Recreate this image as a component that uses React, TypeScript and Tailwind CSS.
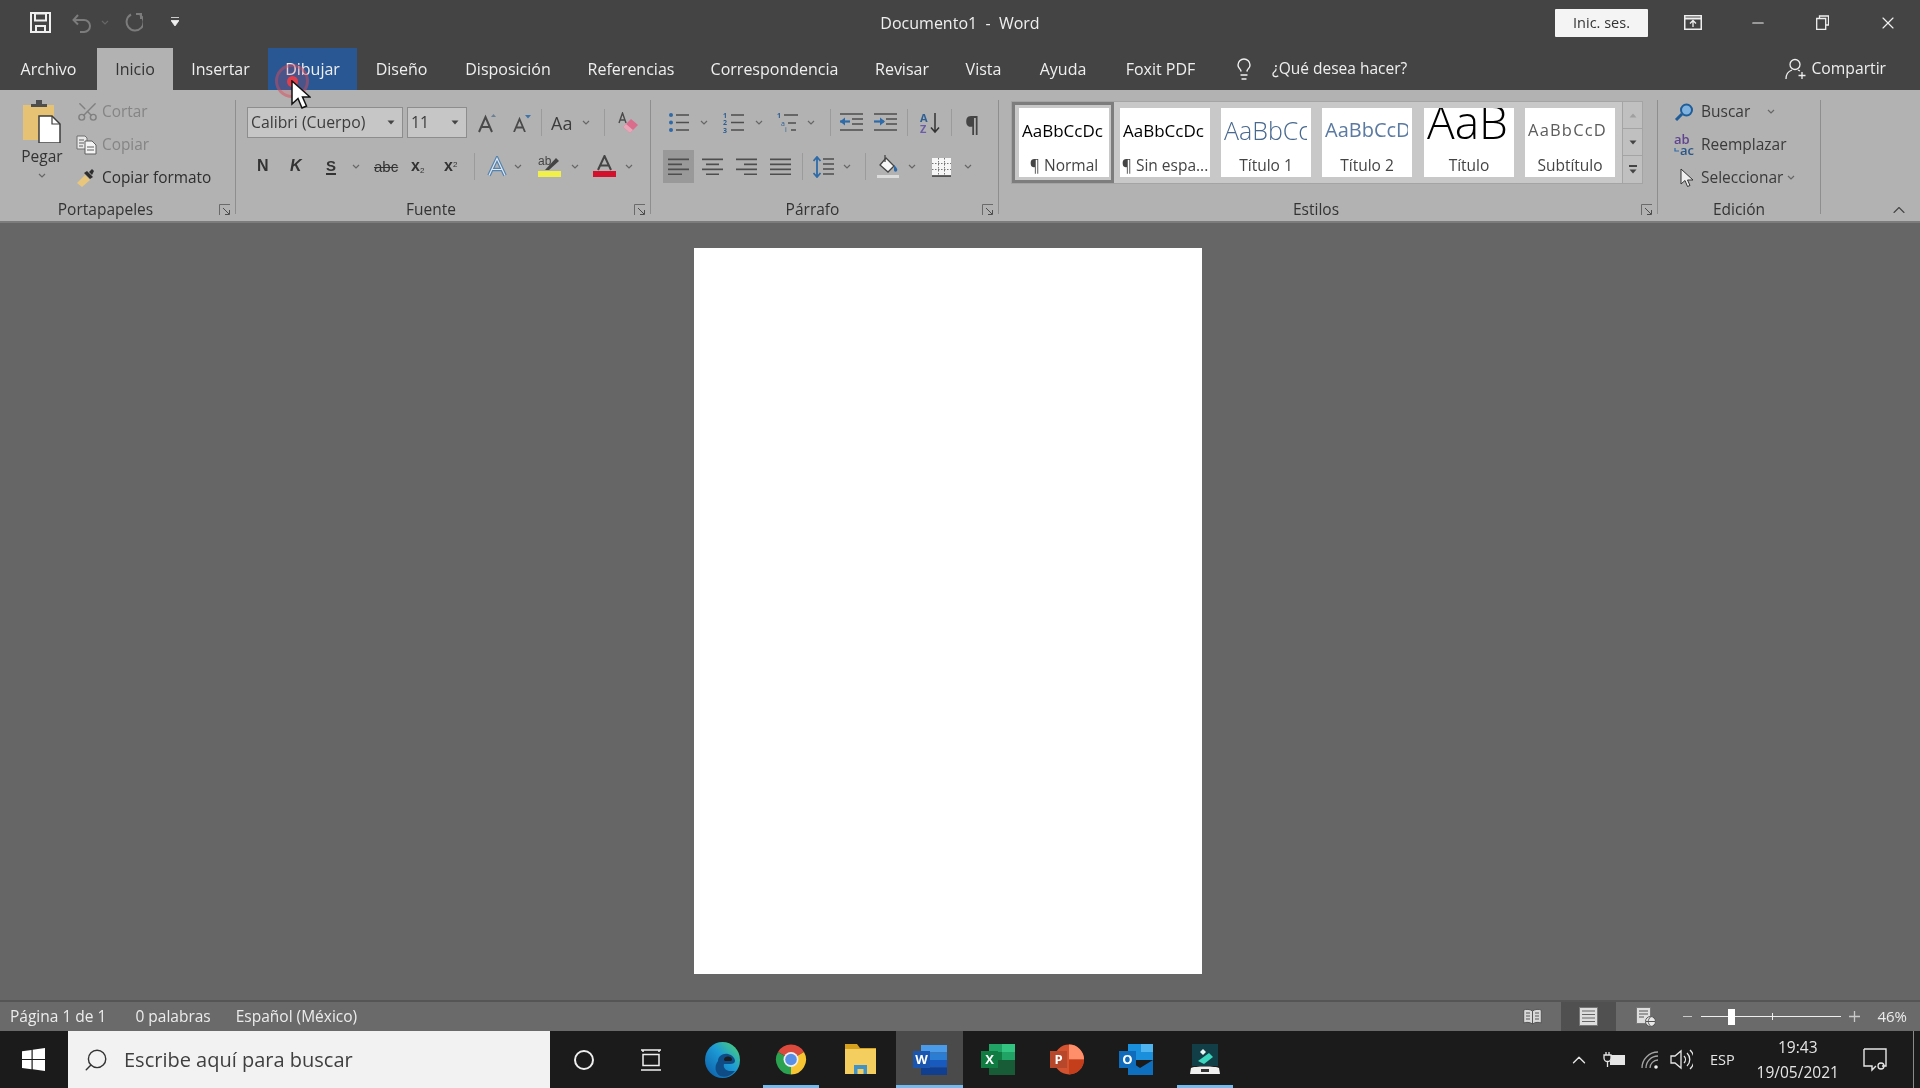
import { ChevronUp, Lightbulb, Minus, Scissors, Search, X } from "lucide-react";
import type { ReactNode } from "react";

const tabs = [
  { label: "Archivo", width: "w-[97px]", style: "text-[#efefef]" },
  { label: "Inicio", width: "w-[76px]", style: "bg-[#b2b2b2] text-[#333333]" },
  { label: "Insertar", width: "w-[95px]", style: "text-[#efefef]" },
  { label: "Dibujar", width: "w-[89px]", style: "bg-[#285794] text-[#efefef]" },
  { label: "Diseño", width: "w-[89px]", style: "text-[#efefef]" },
  { label: "Disposición", width: "w-[124px]", style: "text-[#efefef]" },
  { label: "Referencias", width: "w-[122px]", style: "text-[#efefef]" },
  { label: "Correspondencia", width: "w-[165px]", style: "text-[#efefef]" },
  { label: "Revisar", width: "w-[90px]", style: "text-[#efefef]" },
  { label: "Vista", width: "w-[73px]", style: "text-[#efefef]" },
  { label: "Ayuda", width: "w-[86px]", style: "text-[#efefef]" },
  { label: "Foxit PDF", width: "w-[109px]", style: "text-[#efefef]" },
];

const styles = [
  { label: "¶ Normal", sample: "AaBbCcDc", cls: "text-[17px] text-black", box: "w-[102px] border-[3px] border-[#7d7d7d] pl-[4px]" },
  { label: "¶ Sin espa...", sample: "AaBbCcDc", cls: "text-[17px] text-black", box: "w-[100px] pl-[6px]" },
  { label: "Título 1", sample: "AaBbCc", cls: "text-[25px] font-light text-[#48688f]", box: "w-[101px] pl-[7px]" },
  { label: "Título 2", sample: "AaBbCcD", cls: "text-[20px] text-[#5a7aa2]", box: "w-[102px] pl-[7px]" },
  { label: "Título", sample: "AaB", cls: "text-[46px] font-light text-black -mt-[18px]", box: "w-[101px] pl-[7px]" },
  { label: "Subtítulo", sample: "AaBbCcD", cls: "text-[16.5px] tracking-[1.200px] text-[#5c5c5c]", box: "w-[101px] pl-[7px]" },
];

function Chev({ className = "" }: { className?: string }) {
  return (
    <svg width="8" height="5" viewBox="0 0 8 5" className={`shrink-0 ${className}`}>
      <path d="M1 1l3 3 3-3" fill="none" stroke="#666" strokeWidth="1.2" />
    </svg>
  );
}

function Caret({ className = "" }: { className?: string }) {
  return (
    <svg width="8" height="5" viewBox="0 0 8 5" className={`shrink-0 ${className}`}>
      <path d="M0.5 0.5h7L4 4.5z" fill="#444" />
    </svg>
  );
}

function Sep({ className = "" }: { className?: string }) {
  return <div className={`h-[27px] w-px shrink-0 bg-[#9b9b9b] ${className}`} />;
}

function Launcher() {
  return (
    <svg width="12" height="12" viewBox="0 0 12 12" className="shrink-0">
      <path d="M0.5 11V0.5H11" fill="none" stroke="#6a6a6a" />
      <path d="M4 4l6 6M6 10.5h4.5V6" fill="none" stroke="#4d4d4d" />
    </svg>
  );
}

function Group({ width, label, launcher, children }: { width: string; label: string; launcher?: boolean; children: ReactNode }) {
  return (
    <div className={`flex shrink-0 ${width}`}>
      <div className="flex min-w-0 flex-1 flex-col">
        <div className="h-[105px]">{children}</div>
        <div className="flex h-[23px] items-center">
          <span className="flex-1 pr-[4px] text-center text-[15.5px] text-[#333333]">{label}</span>
          <span className="flex w-[20px] justify-center">{launcher ? <Launcher /> : null}</span>
        </div>
      </div>
      <div className="my-[7px] w-px bg-[#8e8e8e]" />
    </div>
  );
}

function BarLines({ widths, anchor }: { widths: number[]; anchor: "l" | "c" | "r" }) {
  return (
    <svg width="21" height="17" viewBox="0 0 21 17" className="shrink-0">
      {widths.map((w, i) => {
        const x = anchor === "l" ? 0 : anchor === "c" ? (21 - w) / 2 : 21 - w;
        return <rect key={i} x={x} y={i * 5 + 0.5} width={w} height="1.7" fill="#4e4e4e" />;
      })}
    </svg>
  );
}

function ListIcon({ kind }: { kind: "bullets" | "numbers" | "multi" }) {
  const mark = kind === "bullets" ? "#2f6aa8" : "#2f5f92";
  return (
    <svg width="23" height="21" viewBox="0 0 23 21" className="shrink-0">
      {kind === "multi" ? (
        <>
          <path d="M7 3h14M11 11h8M14 18h5" stroke="#4e4e4e" strokeWidth="1.5" />
          <text x="0" y="6" fontSize="7" fontWeight="700" fill={mark}>1</text>
          <text x="4" y="14" fontSize="7" fill={mark}>a</text>
          <text x="8" y="20" fontSize="7" fill={mark}>i</text>
        </>
      ) : (
        <>
          <path d="M8 3h13M8 10.500h13M8 18h13" stroke="#4e4e4e" strokeWidth="1.5" />
          {kind === "bullets" ? (
            <>
              <circle cx="3" cy="3" r="2" fill={mark} />
              <circle cx="3" cy="10.500" r="2" fill={mark} />
              <circle cx="3" cy="18" r="2" fill={mark} />
            </>
          ) : (
            <>
              <text x="0" y="6" fontSize="7" fontWeight="700" fill={mark}>1</text>
              <text x="0" y="13" fontSize="7" fontWeight="700" fill={mark}>2</text>
              <text x="0" y="20.500" fontSize="7" fontWeight="700" fill={mark}>3</text>
            </>
          )}
        </>
      )}
    </svg>
  );
}

function IndentIcon({ dir }: { dir: "out" | "in" }) {
  return (
    <svg width="23" height="19" viewBox="0 0 23 19" className="shrink-0">
      <path d="M0 1h23M12 6h11M12 11h11M0 17h23" stroke="#4e4e4e" strokeWidth="1.5" />
      <path d="M0 8.500h10" stroke="#2f6aa8" strokeWidth="2.200" />
      {dir === "out" ? (
        <path d="M0 8.500l5-4v8z" fill="#2f6aa8" />
      ) : (
        <path d="M11 8.500l-5-4v8z" fill="#2f6aa8" />
      )}
    </svg>
  );
}

function Clipboard() {
  return (
    <svg width="40" height="44" viewBox="0 0 40 44">
      <rect x="1" y="6" width="31" height="35" fill="#e6c274" />
      <path d="M9 8V5h5V1h6v4h5v3z" fill="#4e4e4e" />
      <path d="M17 17h13l8 8v19H17z" fill="#fff" stroke="#3d3d3d" strokeWidth="1.500" />
      <path d="M30 17v8h8" fill="none" stroke="#3d3d3d" strokeWidth="1.200" />
    </svg>
  );
}

function CopyIcon() {
  return (
    <svg width="21" height="20" viewBox="0 0 21 20">
      <path d="M1 1h8l2 2v11H1z" fill="#e8e8e8" stroke="#6f6f6f" />
      <path d="M9 6h7l4 4v9H9z" fill="#f4f4f4" stroke="#5f5f5f" />
      <path d="M3 5h5M3 8h5M3 11h4M11 12h7M11 15h7" stroke="#5f5f5f" />
    </svg>
  );
}

function FormatPainter() {
  return (
    <svg width="20" height="20" viewBox="0 0 20 20">
      <path d="M1 15l8-8 5 5-8 7z" fill="#e8c77d" />
      <path d="M8 5l3-2 6 6-3 2z" fill="#2e2e2e" />
      <path d="M13 4l3-3 2 2-2 4z" fill="#2e2e2e" />
    </svg>
  );
}

function WinLogo() {
  return (
    <svg width="23" height="23" viewBox="0 0 23 23">
      <path d="M0 3.200l9.500-1.300v9H0zM10.700 1.700L23 0v10.900H10.700zM0 12.100h9.500v9.200L0 20zM10.700 12.100H23V23l-12.300-1.700z" fill="#fff" />
    </svg>
  );
}

function EdgeLogo() {
  return (
    <svg width="35" height="36" viewBox="0 0 35 36">
      <defs>
        <linearGradient id="edgeFill" x1="0" y1="1" x2="1" y2="0">
          <stop offset="0" stopColor="#0c59a4" />
          <stop offset="0.55" stopColor="#1c9ad6" />
          <stop offset="1" stopColor="#52d86a" />
        </linearGradient>
      </defs>
      <ellipse cx="17.500" cy="18" rx="17.500" ry="18" fill="url(#edgeFill)" />
      <path d="M13 19c0-5 5-8 10-7 4 1 7 4 7 7 0 2-2 3-5 3H19c-1 3 1 6 5 7l6 0c-4 5-10 7-15 5-5-3-6-10-2-15z" fill="#0f4c86" />
      <path d="M19 17.500c0-2 2-3 4-3 2 0 4 1 4 3 0 1-1 1.500-2 1.500h-4c-1 0-2-.5-2-1.500z" fill="#1c1c1c" />
    </svg>
  );
}

function ChromeLogo() {
  return (
    <svg width="32" height="33" viewBox="0 0 32 32">
      <path d="M16 16L3 8.500A15 15 0 0 1 29 8.500z" fill="#dc4a3d" />
      <path d="M16 16L29 8.500A15 15 0 0 1 16 31z" fill="#f6c531" />
      <path d="M16 16L16 31A15 15 0 0 1 3 8.500z" fill="#2aa24f" />
      <circle cx="16" cy="16" r="7.500" fill="#efefef" />
      <circle cx="16" cy="16" r="5.800" fill="#5a8fe6" />
    </svg>
  );
}

function FolderLogo() {
  return (
    <svg width="31" height="33" viewBox="0 0 31 33">
      <path d="M0 1h12l3 4h16v5H0z" fill="#d6a21e" />
      <rect x="0" y="6" width="31" height="25" fill="#f4cf60" />
      <path d="M9 31v-9h13v9h-3.500v-5h-6v5z" fill="#4193c7" />
    </svg>
  );
}

function WordLogo() {
  return (
    <svg width="34" height="30" viewBox="0 0 34 30">
      <rect x="8" y="0" width="26" height="7.500" fill="#4a9bea" />
      <rect x="8" y="7.500" width="26" height="7.500" fill="#2b7cd3" />
      <rect x="8" y="15" width="26" height="7.500" fill="#185abd" />
      <rect x="8" y="22.500" width="26" height="7.500" fill="#103f91" />
      <rect x="0" y="6" width="17" height="17" fill="#1a56b0" />
      <text x="8.500" y="19" textAnchor="middle" fontSize="13" fontWeight="700" fill="#fff">W</text>
    </svg>
  );
}

function ExcelLogo() {
  return (
    <svg width="34" height="31" viewBox="0 0 34 31">
      <rect x="8" y="0" width="13" height="8" fill="#21a366" />
      <rect x="21" y="0" width="13" height="8" fill="#33c481" />
      <rect x="8" y="8" width="13" height="8" fill="#107c41" />
      <rect x="21" y="8" width="13" height="8" fill="#21a366" />
      <rect x="8" y="16" width="26" height="15" fill="#185c37" />
      <rect x="0" y="7" width="17" height="17" fill="#107c41" />
      <text x="8.500" y="20" textAnchor="middle" fontSize="13" fontWeight="700" fill="#fff">X</text>
    </svg>
  );
}

function PptLogo() {
  return (
    <svg width="34" height="31" viewBox="0 0 34 31">
      <circle cx="19" cy="15.500" r="15" fill="#d35230" />
      <path d="M19 15.500V0.500a15 15 0 0 1 15 15z" fill="#ff8f6b" />
      <path d="M19 15.500h15a15 15 0 0 1-15 15z" fill="#c43e1c" />
      <rect x="0" y="7" width="17" height="17" fill="#b7472a" />
      <text x="8.500" y="20" textAnchor="middle" fontSize="13" fontWeight="700" fill="#fff">P</text>
    </svg>
  );
}

function OutlookLogo() {
  return (
    <svg width="34" height="31" viewBox="0 0 34 31">
      <rect x="9" y="0" width="25" height="16" fill="#1a8fdc" />
      <rect x="22" y="0" width="12" height="8" fill="#50b4ef" />
      <path d="M9 16l12 8 13-8v15H9z" fill="#0f6fbf" />
      <rect x="0" y="7" width="17" height="17" fill="#0f6cbd" />
      <text x="8.500" y="20" textAnchor="middle" fontSize="13" fontWeight="700" fill="#fff">O</text>
    </svg>
  );
}

function FilmLogo() {
  return (
    <svg width="30" height="31" viewBox="0 0 30 31">
      <path d="M2 0h26v22H2z" fill="#123f47" />
      <path d="M13 5l3 3-3 3-3-3z" fill="#e8f6f4" />
      <path d="M8 17l11-8 4 4-9 7z" fill="#3bd6bd" />
      <path d="M1 24c3-2 25-2 28 0l1 6H0z" fill="#efefef" />
      <rect x="11" y="25" width="8" height="3" fill="#333" />
    </svg>
  );
}

export default function App() {
  return (
    <div className="h-[1088px] w-[1920px] overflow-hidden bg-[#444444]">
      <div className="relative flex h-[1088px] w-[1920px] flex-col overflow-hidden bg-[#666666] font-['Open_Sans',sans-serif] blur-[0.4px]">
        {/* barra de titulo */}
        <div className="flex h-[48px] shrink-0 items-center bg-[#444444] pb-[3px]">
          <div className="flex flex-1 items-center">
            <svg width="21" height="21" viewBox="0 0 21 21" className="ml-[30px]">
              <path d="M1 1h19v19H1z" fill="none" stroke="#efefef" strokeWidth="2" />
              <path d="M5 1.500h11v7H5zM6 20v-6h9v6" fill="none" stroke="#efefef" strokeWidth="2" />
            </svg>
            <svg width="20" height="20" viewBox="0 0 20 20" className="ml-[21px]">
              <path d="M6 2L1.500 7 6 11.500M2 7h10a6 6 0 0 1 0 12H8" fill="none" stroke="#7c7c7c" strokeWidth="2" />
            </svg>
            <Chev className="ml-[9px]" />
            <svg width="19" height="20" viewBox="0 0 19 20" className="ml-[15px]">
              <path d="M12 1h5v5M16 2a8.500 8.500 0 1 1-9-.5" fill="none" stroke="#7c7c7c" strokeWidth="2" />
            </svg>
            <svg width="8" height="11" viewBox="0 0 8 11" className="ml-[28px]">
              <path d="M0 0.500h8M0 3.500h8L4 9z" fill="#efefef" stroke="#efefef" strokeWidth="0.800" />
            </svg>
          </div>
          <div className="whitespace-pre text-[16px] text-[#efefef]">Documento1  -  Word</div>
          <div className="flex flex-1 items-center justify-end">
            <div className="flex h-[28px] w-[93px] items-center justify-center rounded-[1px] bg-[#f4f4f4] text-[14.5px] text-[#333333]">Inic. ses.</div>
            <svg width="18" height="15" viewBox="0 0 18 15" className="ml-[36px]">
              <rect x="0.750" y="0.750" width="16.500" height="13.500" fill="none" stroke="#efefef" strokeWidth="1.500" />
              <path d="M0 3.500h18" stroke="#efefef" strokeWidth="2" />
              <path d="M9 12V6M6 8.500l3-3 3 3" fill="none" stroke="#efefef" strokeWidth="1.300" />
            </svg>
            <Minus size={18} strokeWidth={1.5} className="ml-[47px] text-[#efefef]" />
            <svg width="13" height="15" viewBox="0 0 13 15" className="ml-[49px]">
              <path d="M3.500 3V1h9v9h-3M0.700 3.500h9v11h-9z" fill="none" stroke="#efefef" strokeWidth="1.300" />
            </svg>
            <X size={20} strokeWidth={1.4} className="ml-[49px] mr-[22px] text-[#efefef]" />
          </div>
        </div>

        {/* pestañas */}
        <div className="flex h-[42px] shrink-0 items-stretch bg-[#444444]">
          {tabs.map((tab) => (
            <div key={tab.label} className={`flex items-center justify-center text-[16px] ${tab.width} ${tab.style}`}>
              {tab.label}
            </div>
          ))}
          <div className="ml-[17px] flex items-center">
            <Lightbulb size={24} strokeWidth={1.4} className="text-[#efefef]" />
            <span className="ml-[16px] text-[15.5px] text-[#efefef]">¿Qué desea hacer?</span>
          </div>
          <div className="ml-auto mr-[34px] flex items-center">
            <svg width="21" height="22" viewBox="0 0 21 22">
              <circle cx="10" cy="6.500" r="5" fill="none" stroke="#efefef" strokeWidth="1.300" />
              <path d="M1 21c0-5 3-8 6-9M13 12l2 1M17 14v7M13.500 17.500h7" fill="none" stroke="#efefef" strokeWidth="1.300" />
            </svg>
            <span className="ml-[5px] text-[15.7px] text-[#efefef]">Compartir</span>
          </div>
        </div>

        {/* cinta */}
        <div className="flex h-[133px] shrink-0 border-b-[2px] border-[#7c7c7c] bg-[#b2b2b2] pt-[3px]">
          <Group width="w-[236px]" label="Portapapeles" launcher>
            <div className="flex">
              <div className="ml-[22px] mt-[6px] flex w-[40px] flex-col items-center">
                <Clipboard />
                <span className="mt-[3px] text-[15.5px] leading-[20px] text-[#333333]">Pegar</span>
                <Chev className="mt-[7px]" />
              </div>
              <div className="ml-[14px] mt-[2px] flex flex-col text-[15.4px]">
                <div className="flex h-[33px] items-center">
                  <Scissors size={23} strokeWidth={1.5} className="-scale-x-100 rotate-90 text-[#808080]" />
                  <span className="ml-[3px] text-[#858585]">Cortar</span>
                </div>
                <div className="flex h-[33px] items-center">
                  <CopyIcon />
                  <span className="ml-[5px] text-[#858585]">Copiar</span>
                </div>
                <div className="flex h-[33px] items-center">
                  <FormatPainter />
                  <span className="ml-[6px] text-[#2e2e2e]">Copiar formato</span>
                </div>
              </div>
            </div>
          </Group>

          <Group width="w-[415px]" label="Fuente" launcher>
            <div className="box-content flex h-[31px] items-center pt-[14px]">
              <div className="ml-[11px] flex h-[31px] w-[156px] items-center justify-between border border-[#8d8d8d] bg-[#c6c6c6] pl-[3px] pr-[7px] text-[15.8px] text-[#3c3c3c]">
                Calibri (Cuerpo)
                <Caret />
              </div>
              <div className="ml-[4px] flex h-[31px] w-[60px] items-center justify-between border border-[#8d8d8d] bg-[#c6c6c6] pl-[3px] pr-[7px] text-[15.8px] text-[#3c3c3c]">
                11
                <Caret />
              </div>
              <svg width="18" height="20" viewBox="0 0 18 20" className="ml-[11px] shrink-0">
                <path d="M1 19L7.500 4 14 19M3.500 14h8" fill="none" stroke="#4a4a4a" strokeWidth="2" />
                <path d="M13 4l2.500-3L18 4z" fill="#6b7f95" />
              </svg>
              <svg width="18" height="18" viewBox="0 0 18 18" className="ml-[17px] shrink-0">
                <path d="M1 18L6.500 5 12 18M3 13.500h7" fill="none" stroke="#4a4a4a" strokeWidth="1.800" />
                <path d="M12 1h6l-3 3.500z" fill="#3f74a9" />
              </svg>
              <Sep className="ml-[10px]" />
              <span className="ml-[9px] w-[21px] shrink-0 text-[18px] leading-none text-[#3c3c3c]">Aa</span>
              <Chev className="ml-[10px]" />
              <Sep className="ml-[14px]" />
              <svg width="21" height="22" viewBox="0 0 21 22" className="ml-[13px] shrink-0">
                <path d="M1 11L4.500 1 8 11M2.500 8h4" fill="none" stroke="#4a4a4a" strokeWidth="1.400" />
                <path d="M5 15l8-8 7 6-8 8z" fill="#d96d8b" />
                <path d="M5 15l3-3 7 6-3 3z" fill="#eaa6b9" />
              </svg>
            </div>
            <div className="mt-[12px] flex h-[32px] items-center font-['Liberation_Sans',sans-serif] text-[#333333]">
              <span className="ml-[21px] w-[11px] text-[16px] font-bold leading-none">N</span>
              <span className="ml-[22px] w-[10px] text-[16px] font-bold italic leading-none">K</span>
              <span className="ml-[26px] w-[10px] border-b-[2px] border-[#333333] text-[15px] font-bold leading-[15px]">S</span>
              <Chev className="ml-[16px]" />
              <span className="ml-[14px] w-[23px] text-[15px] leading-none line-through">abc</span>
              <span className="ml-[14px] w-[17px] text-[16px] font-bold leading-none">x<sub className="text-[8px] font-normal">2</sub></span>
              <span className="ml-[16px] w-[18px] text-[16px] font-bold leading-none">x<sup className="text-[8px] font-normal">2</sup></span>
              <Sep className="ml-[12px]" />
              <svg width="20" height="21" viewBox="0 0 20 20" className="ml-[12px] shrink-0">
                <path d="M2 19L10 2l8 17M5.500 13h9" fill="none" stroke="#3f77ad" strokeWidth="3.600" opacity="0.800" />
                <path d="M2 19L10 2l8 17M5.500 13h9" fill="none" stroke="#dfe8f0" strokeWidth="1.200" />
              </svg>
              <Chev className="ml-[7px]" />
              <svg width="23" height="22" viewBox="0 0 23 22" className="ml-[16px] shrink-0">
                <text x="0" y="10" fontSize="12" fill="#444">ab</text>
                <path d="M7 15L18 3l3 3-10 9z" fill="#444" />
                <rect x="0" y="16" width="23" height="6" fill="#f1ef4a" />
              </svg>
              <Chev className="ml-[10px]" />
              <svg width="23" height="22" viewBox="0 0 23 22" className="ml-[14px] shrink-0">
                <path d="M5 15L11.500 1 18 15M7.500 10.500h8" fill="none" stroke="#444" strokeWidth="2" />
                <rect x="0" y="16" width="23" height="6" fill="#d3112c" />
              </svg>
              <Chev className="ml-[9px]" />
            </div>
          </Group>

          <Group width="w-[348px]" label="Párrafo" launcher>
            <div className="box-content flex h-[31px] items-center pt-[14px]">
              <div className="ml-[17px]"><ListIcon kind="bullets" /></div>
              <Chev className="ml-[9px]" />
              <div className="ml-[15px]"><ListIcon kind="numbers" /></div>
              <Chev className="ml-[9px]" />
              <div className="ml-[14px]"><ListIcon kind="multi" /></div>
              <Chev className="ml-[7px]" />
              <Sep className="ml-[15px]" />
              <div className="ml-[9px]"><IndentIcon dir="out" /></div>
              <div className="ml-[11px]"><IndentIcon dir="in" /></div>
              <Sep className="ml-[10px]" />
              <svg width="20" height="22" viewBox="0 0 20 22" className="ml-[12px] shrink-0">
                <text x="0" y="10" fontSize="11" fontWeight="700" fill="#2f5f92">A</text>
                <text x="0" y="21" fontSize="11" fontWeight="700" fill="#6b5ba8">Z</text>
                <path d="M15 1v19M11 15.500l4 4.500 4-4.500" fill="none" stroke="#333" strokeWidth="1.500" />
              </svg>
              <Sep className="ml-[11px]" />
              <span className="ml-[13px] w-[15px] text-[22px] font-bold leading-none text-[#444444]">¶</span>
            </div>
            <div className="mt-[12px] flex h-[33px] items-center">
              <div className="ml-[12px] flex h-[33px] w-[31px] shrink-0 items-center justify-center bg-[#999999]">
                <BarLines widths={[21, 14, 21, 14]} anchor="l" />
              </div>
              <div className="ml-[8px]"><BarLines widths={[21, 13, 21, 13]} anchor="c" /></div>
              <div className="ml-[13px]"><BarLines widths={[21, 13, 21, 13]} anchor="r" /></div>
              <div className="ml-[13px]"><BarLines widths={[21, 21, 21, 21]} anchor="l" /></div>
              <Sep className="ml-[11px]" />
              <svg width="21" height="22" viewBox="0 0 21 22" className="ml-[10px] shrink-0">
                <path d="M4 1v20M0.500 5L4 1l3.500 4M0.500 17L4 21l3.500-4" fill="none" stroke="#2f6aa8" strokeWidth="1.800" />
                <path d="M10 3h11M10 8h11M10 13h11M10 18h11" stroke="#4e4e4e" strokeWidth="1.600" />
              </svg>
              <Chev className="ml-[9px]" />
              <Sep className="ml-[14px]" />
              <svg width="22" height="24" viewBox="0 0 22 24" className="ml-[11px] shrink-0">
                <path d="M9 3l8 8-6 6-8-7z" fill="#f7f7f7" stroke="#444" strokeWidth="1.300" />
                <path d="M8 0v7" stroke="#444" strokeWidth="1.300" />
                <path d="M17 10c2 2 4 4 3 6-1 1-3 1-3-1z" fill="#2f6aa8" />
                <rect x="0" y="20" width="22" height="3" fill="#dcdcdc" />
              </svg>
              <Chev className="ml-[9px]" />
              <svg width="19" height="20" viewBox="0 0 19 20" className="ml-[16px] shrink-0">
                <rect x="0" y="1" width="19" height="18" fill="#f6f6f6" />
                <path d="M0 6.500h19M0 12.500h19M6.500 1v18M12.500 1v18" stroke="#777" strokeDasharray="1.500 1.500" />
                <path d="M0 19h19" stroke="#333" strokeWidth="1.500" />
              </svg>
              <Chev className="ml-[13px]" />
            </div>
          </Group>

          <Group width="w-[659px]" label="Estilos" launcher>
            <div className="ml-[13px] mt-[9px] flex h-[81px] w-[630px] bg-[#c8c8c8] outline outline-1 outline-[#a4a4a4]">
              {styles.map((item) => (
                <div key={item.label} className={`flex shrink-0 items-center ${item.box}`}>
                  <div className="flex h-[69px] w-[90px] flex-col overflow-hidden bg-white">
                    <div className="ml-[3px] flex h-[44px] w-[83px] items-center overflow-hidden whitespace-nowrap">
                      <span className={`leading-none ${item.cls}`}>{item.sample}</span>
                    </div>
                    <div className="flex h-[25px] items-center justify-center whitespace-nowrap pt-[2px] text-[15.5px] text-[#444444]">{item.label}</div>
                  </div>
                </div>
              ))}
              <div className="ml-auto flex w-[19px] shrink-0 flex-col bg-[#c0c0c0] outline outline-1 outline-[#a4a4a4]">
                <div className="flex h-[27px] items-center justify-center border-b border-[#a4a4a4]">
                  <svg width="8" height="5" viewBox="0 0 8 5"><path d="M0.500 4.500h7L4 0.500z" fill="#a0a0a0" /></svg>
                </div>
                <div className="flex h-[27px] items-center justify-center border-b border-[#a4a4a4]"><Caret /></div>
                <div className="flex h-[27px] flex-col items-center justify-center gap-[2px]">
                  <div className="h-[1.5px] w-[8px] bg-[#444444]" />
                  <Caret />
                </div>
              </div>
            </div>
          </Group>

          <div className="flex w-[163px] shrink-0">
            <div className="flex flex-1 flex-col">
              <div className="h-[105px] pl-[16px] pt-[2px] text-[15.5px] text-[#3a3a3a]">
                <div className="flex h-[33px] items-center">
                  <svg width="20" height="18" viewBox="0 0 20 18">
                    <circle cx="12.500" cy="7" r="5.500" fill="#7fb2df" stroke="#1f5d99" strokeWidth="2" />
                    <path d="M8 11l-6 6" stroke="#1f5d99" strokeWidth="3" />
                  </svg>
                  <span className="ml-[7px]">Buscar</span>
                  <Chev className="ml-[17px]" />
                </div>
                <div className="flex h-[33px] items-center">
                  <svg width="22" height="22" viewBox="0 0 22 22">
                    <text x="0" y="10" fontSize="13" fontWeight="600" fill="#5f438f">ab</text>
                    <text x="6" y="21" fontSize="13" fontWeight="600" fill="#2a5689">ac</text>
                    <path d="M1 14v3h4" fill="none" stroke="#2f6aa8" strokeWidth="1.200" />
                  </svg>
                  <span className="ml-[5px]">Reemplazar</span>
                </div>
                <div className="flex h-[33px] items-center">
                  <svg width="14" height="20" viewBox="0 0 14 20" className="ml-[6px]">
                    <path d="M1 1v15l4-3.500 2.500 6 2.500-1-2.500-5.500H13z" fill="#efefef" stroke="#333" />
                  </svg>
                  <span className="ml-[7px]">Seleccionar</span>
                  <Chev className="ml-[4px]" />
                </div>
              </div>
              <div className="flex h-[23px] items-center justify-center text-[15.5px] text-[#333333]">Edición</div>
            </div>
            <div className="my-[7px] w-px bg-[#8e8e8e]" />
          </div>
          <div className="flex flex-1 items-end justify-end pb-[1px] pr-[11px]">
            <ChevronUp size={20} strokeWidth={1.3} className="text-[#444444]" />
          </div>
        </div>

        {/* area del documento */}
        <div className="flex min-h-0 flex-1 justify-center bg-[#666666] pr-[24px] pt-[25px]">
          <div className="h-[726px] w-[508px] bg-white" />
        </div>

        {/* barra de estado */}
        <div className="flex h-[31px] shrink-0 items-center border-t-[2px] border-[#555555] bg-[#6a6a6a] text-[15.5px] text-[#ececec]">
          <span className="ml-[10px]">Página 1 de 1</span>
          <span className="ml-[29px]">0 palabras</span>
          <span className="ml-[25px]">Español (México)</span>
          <svg width="19" height="18" viewBox="0 0 19 18" className="ml-auto">
            <path d="M9.500 3C7 1 3 1 .7 2v13c2.300-1 6.300-1 8.800 1 2.500-2 6.500-2 8.800-1V2C16 1 12 1 9.500 3zM9.500 3v13" fill="#d8d8d8" stroke="#555" />
            <path d="M3 5h4M3 8h4M3 11h4M12 5h4M12 8h4M12 11h4" stroke="#555" />
          </svg>
          <div className="ml-[19px] flex h-[29px] w-[55px] items-center justify-center bg-[#505050]">
            <svg width="19" height="19" viewBox="0 0 19 19">
              <rect x="0.500" y="0.500" width="18" height="18" fill="#dedede" stroke="#777" />
              <path d="M3 4h13M3 7.500h13M3 11h13M3 14.500h13" stroke="#666" />
            </svg>
          </div>
          <svg width="20" height="20" viewBox="0 0 20 20" className="ml-[20px]">
            <rect x="0.500" y="0.500" width="14" height="16" fill="#dedede" stroke="#777" />
            <path d="M3 4h9M3 7h9M3 10h5" stroke="#555" />
            <circle cx="14.500" cy="14.500" r="5" fill="#e8e8e8" stroke="#555" />
            <path d="M10 14.500h9M14.500 10c-3 3-3 6 0 9" stroke="#555" fill="none" />
          </svg>
          <div className="ml-[27px] h-[1.5px] w-[9px] bg-[#c9c9c9]" />
          <div className="relative ml-[9px] h-[1.5px] w-[140px] bg-[#efefef]">
            <div className="absolute left-[27px] top-[-7px] h-[16px] w-[7px] bg-white" />
            <div className="absolute left-[71px] top-[-3px] h-[7px] w-px bg-[#efefef]" />
          </div>
          <svg width="11" height="11" viewBox="0 0 11 11" className="ml-[8px]">
            <path d="M0 5.500h11M5.500 0v11" stroke="#c9c9c9" strokeWidth="1.300" />
          </svg>
          <span className="ml-[17px] mr-[13px] text-[15px]">46%</span>
        </div>

        {/* barra de tareas */}
        <div className="flex h-[57px] shrink-0 items-center bg-[#1b1b1b]">
          <div className="ml-[22px] w-[23px]"><WinLogo /></div>
          <div className="ml-[23px] flex h-[57px] w-[482px] items-center bg-[#f2f2f2]">
            <Search size={26} strokeWidth={1.3} className="ml-[15px] -scale-x-100 text-[#333333]" />
            <span className="ml-[15px] text-[20px] text-[#3f3f3f]">Escribe aquí para buscar</span>
          </div>
          <div className="ml-[24px] h-[20px] w-[20px] rounded-full border-[2.5px] border-[#efefef]" />
          <svg width="22" height="24" viewBox="0 0 22 24" className="ml-[46px]">
            <path d="M1 2h20M3 6.500h16v11H3zM1 22h20M19 2v2M3 2v2" fill="none" stroke="#efefef" strokeWidth="1.500" />
          </svg>
          <div className="ml-[43px]"><EdgeLogo /></div>
          <div className="relative ml-[23px] flex h-[57px] w-[56px] items-center justify-center">
            <ChromeLogo />
            <div className="absolute inset-x-0 bottom-0 h-[3px] bg-[#76b9ed]" />
          </div>
          <div className="ml-[26px]"><FolderLogo /></div>
          <div className="relative ml-[20px] flex h-[57px] w-[67px] items-center justify-center bg-[#4a4a4a]">
            <WordLogo />
            <div className="absolute inset-x-0 bottom-0 h-[3px] bg-[#76b9ed]" />
          </div>
          <div className="ml-[18px]"><ExcelLogo /></div>
          <div className="ml-[35px]"><PptLogo /></div>
          <div className="ml-[35px]"><OutlookLogo /></div>
          <div className="relative ml-[24px] flex h-[57px] w-[56px] items-center justify-center">
            <FilmLogo />
            <div className="absolute inset-x-0 bottom-0 h-[3px] bg-[#76b9ed]" />
          </div>
          <ChevronUp size={22} strokeWidth={1.5} className="ml-[335px] text-[#e6e6e6]" />
          <svg width="23" height="15" viewBox="0 0 23 15" className="ml-[13px]">
            <rect x="7" y="3" width="15" height="10" fill="#e6e6e6" />
            <path d="M3 0v3M6 0v3M1 3h7v3a3.500 3.500 0 0 1-7 0zM4.500 9v6" stroke="#e6e6e6" fill="#1b1b1b" strokeWidth="1.300" />
          </svg>
          <svg width="18" height="18" viewBox="0 0 18 18" className="ml-[15px]">
            <path d="M1 17A16 16 0 0 1 17 1M5 17A12 12 0 0 1 17 5M9 17a8 8 0 0 1 8-8" fill="none" stroke="#a5a5a5" strokeWidth="1.300" />
            <circle cx="15" cy="16" r="1.800" fill="#efefef" />
          </svg>
          <svg width="23" height="21" viewBox="0 0 23 21" className="ml-[11px]">
            <path d="M1 7h4l6-5v17l-6-5H1z" fill="none" stroke="#e6e6e6" strokeWidth="1.300" />
            <path d="M14 7a5 5 0 0 1 0 7M17 4a9 9 0 0 1 0 13M20 1a13 13 0 0 1 0 19" fill="none" stroke="#e6e6e6" strokeWidth="1.300" />
          </svg>
          <span className="ml-[17px] text-[14.5px] text-[#e6e6e6]">ESP</span>
          <div className="ml-[21px] flex w-[84px] flex-col items-center text-[15.500px] leading-[25px] text-[#e6e6e6]">
            <span>19:43</span>
            <span>19/05/2021</span>
          </div>
          <svg width="24" height="24" viewBox="0 0 24 24" className="ml-[23px]">
            <path d="M1 1h22v17h-4M13 18l-4 4v-4H1V1" fill="none" stroke="#e6e6e6" strokeWidth="1.400" />
            <circle cx="18" cy="18" r="3" fill="none" stroke="#e6e6e6" strokeWidth="1.300" />
          </svg>
          <div className="ml-auto mr-[6px] h-[57px] w-px bg-[#8a8a8a]" />
        </div>

        {/* cursor sobre Dibujar */}
        <div className="absolute left-[275px] top-[64px] h-[34px] w-[34px] rounded-full border-[3px] border-[#d9495c]/40 bg-[#d9495c]/20" />
        <div className="absolute left-[287px] top-[76px] h-[11px] w-[11px] rounded-full bg-[#df3f4c]" />
        <svg width="20" height="29" viewBox="0 0 20 29" className="absolute left-[291px] top-[80px]">
          <path d="M1 1v23l6-5.500 4 9.500 4.500-2-4-9H19z" fill="#fff" stroke="#111" strokeWidth="1.500" />
        </svg>
      </div>
    </div>
  );
}
